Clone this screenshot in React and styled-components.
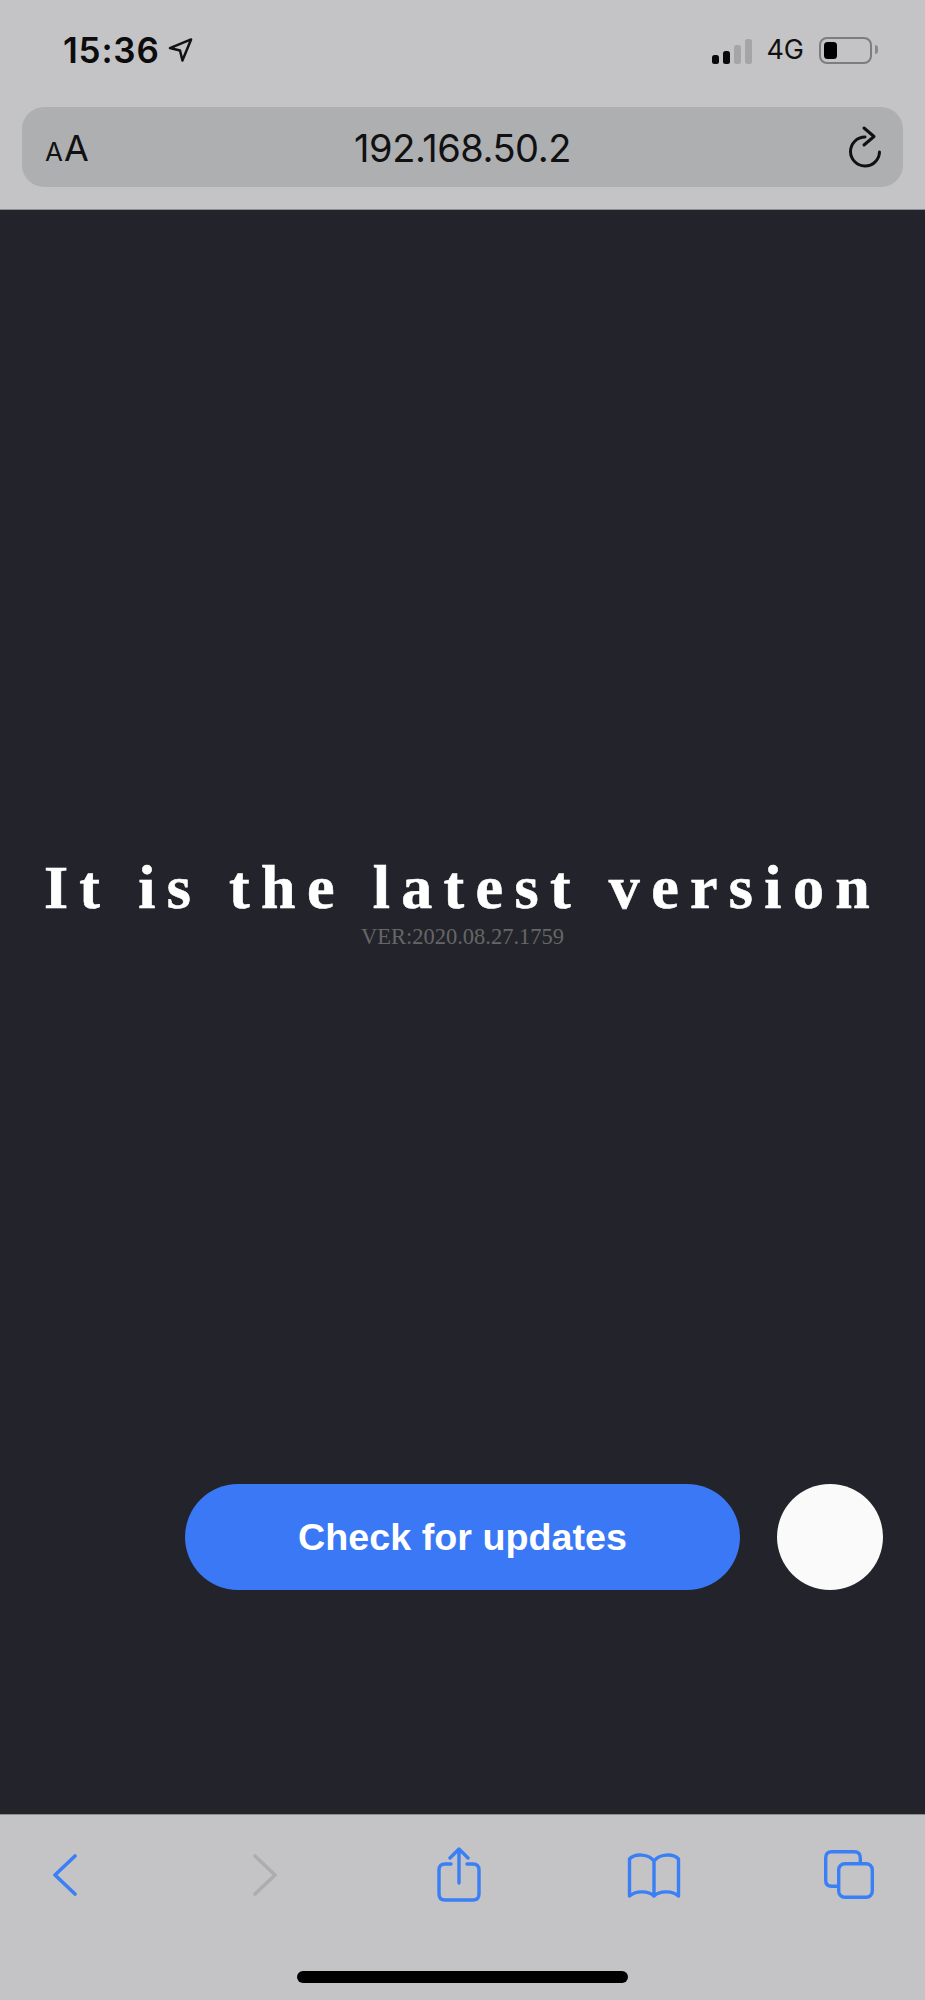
import React from 'react'
import styled, { createGlobalStyle } from 'styled-components'

const BLUE = '#3a7ff6'

const Global = createGlobalStyle`
  html, body { margin: 0; padding: 0; background: #c4c4c6; }
`

const App = () => (
  <>
    <Global />
    <Page>
      <TopBar>
        <StatusRow>
          <TimeGroup>
            <Time>15:36</Time>
            <svg width="25" height="26" viewBox="0 0 26 26">
              <path d="M24 2 L2 11 L12.5 13.5 L15 24 Z" fill="none" stroke="#111" strokeWidth="2.6" strokeLinejoin="round" />
            </svg>
          </TimeGroup>
          <StatusGroup>
            <Signal>
              <Bar $h={9} $on />
              <Bar $h={13} $on />
              <Bar $h={19} />
              <Bar $h={25} />
            </Signal>
            <Network>4G</Network>
            <Battery>
              <BatteryFill />
            </Battery>
          </StatusGroup>
        </StatusRow>
        <UrlBar>
          <FontSize><Small>A</Small>A</FontSize>
          <Url>192.168.50.2</Url>
          <svg width="38" height="44" viewBox="0 0 38 44">
            <path d="M16 12 A14.5 14.5 0 1 0 30.5 27" fill="none" stroke="#111" strokeWidth="3" strokeLinecap="round" />
            <path d="M15 3 L25 11.5 L15 20" fill="none" stroke="#111" strokeWidth="3" strokeLinecap="round" strokeLinejoin="round" />
          </svg>
        </UrlBar>
      </TopBar>

      <Main>
        <Title>It is the latest version</Title>
        <Version>VER:2020.08.27.1759</Version>
        <Actions>
          <CheckButton>Check for updates</CheckButton>
          <RoundButton />
        </Actions>
      </Main>

      <BottomBar>
        <Tools>
          <Tool $left={0}>
            <svg width="24" height="42" viewBox="0 0 24 42">
              <path d="M22 2 L2 21 L22 40" fill="none" stroke={BLUE} strokeWidth="3.6" strokeLinecap="round" strokeLinejoin="round" />
            </svg>
          </Tool>
          <Tool $left={176}>
            <svg width="24" height="42" viewBox="0 0 24 42">
              <path d="M2 2 L22 21 L2 40" fill="none" stroke="#adadaf" strokeWidth="3.6" strokeLinecap="round" strokeLinejoin="round" />
            </svg>
          </Tool>
          <Tool $left={160}>
            <svg width="44" height="56" viewBox="0 0 44 56">
              <path d="M14 17 H8 Q2 17 2 23 V47 Q2 53 8 53 H36 Q42 53 42 47 V23 Q42 17 36 17 H30" fill="none" stroke={BLUE} strokeWidth="3.4" strokeLinecap="round" />
              <path d="M22 36 V3 M13 11 L22 2 L31 11" fill="none" stroke={BLUE} strokeWidth="3.4" strokeLinecap="round" strokeLinejoin="round" />
            </svg>
          </Tool>
          <Tool $left={146}>
            <svg width="54" height="46" viewBox="0 0 54 46">
              <path d="M27 9 C22 2 8 1 2.5 7 V44 C8 39 21 38 27 44 C33 38 46 39 51.5 44 V7 C46 1 32 2 27 9 Z M27 9 V44" fill="none" stroke={BLUE} strokeWidth="3.4" strokeLinejoin="round" />
            </svg>
          </Tool>
          <Tool $left={143}>
            <svg width="52" height="52" viewBox="0 0 52 52">
              <path d="M36.3 13 V8.7 Q36.3 2.7 30.3 2.7 H7.7 Q1.7 2.7 1.7 8.7 V31.3 Q1.7 37.3 7.7 37.3 H13" fill="none" stroke={BLUE} strokeWidth="3.4" />
              <rect x="14.7" y="14.7" width="33.6" height="33.6" rx="6" fill="none" stroke={BLUE} strokeWidth="3.4" />
            </svg>
          </Tool>
        </Tools>
        <HomeIndicator />
      </BottomBar>
    </Page>
  </>
)

export default App

const Page = styled.div`
  width: 925px;
  height: 2000px;
  display: flex;
  flex-direction: column;
  overflow: hidden;
`

const TopBar = styled.header`
  height: 209px;
  flex: none;
  background: #c4c4c6;
  border-bottom: 1px solid #8e8e92;
  padding: 0 22px;
`

const StatusRow = styled.div`
  height: 107px;
  display: flex;
  align-items: flex-start;
  justify-content: space-between;
  padding: 0 31px 0 41px;
`

const TimeGroup = styled.div`
  display: flex;
  align-items: center;
  gap: 8px;
  margin-top: 29px;
`

const Time = styled.span`
  font: 600 35px/42px Inter, "Liberation Sans", sans-serif;
  letter-spacing: 0.8px;
  color: #0c0c0c;
`

const StatusGroup = styled.div`
  display: flex;
  align-items: center;
  margin-top: 36px;
`

const Signal = styled.div`
  display: flex;
  align-items: flex-end;
  gap: 3.5px;
  height: 27px;
`

const Bar = styled.i`
  display: block;
  width: 7.5px;
  height: ${p => p.$h}px;
  border-radius: 2.5px;
  background: ${p => (p.$on ? '#0a0a0a' : '#a5a5a8')};
`

const Network = styled.span`
  font: 400 27px/28px Inter, "Liberation Sans", sans-serif;
  color: #111;
  margin: 0 15px 0 14px;
`

const Battery = styled.div`
  position: relative;
  box-sizing: border-box;
  width: 53px;
  height: 27px;
  padding: 3px;
  border: 2.5px solid #7d7d80;
  border-radius: 8px;
  &::after {
    content: '';
    position: absolute;
    right: -8px;
    top: 6px;
    width: 3.5px;
    height: 9px;
    background: #8a8a8d;
    border-radius: 0 4px 4px 0;
  }
`

const BatteryFill = styled.div`
  width: 13px;
  height: 100%;
  background: #000;
  border-radius: 3.5px;
`

const UrlBar = styled.div`
  position: relative;
  height: 80px;
  display: flex;
  align-items: center;
  justify-content: space-between;
  background: #aeafb1;
  border-radius: 22px;
  padding: 0 16px 0 23px;
`

const FontSize = styled.span`
  font: 400 36px/44px Inter, "Liberation Sans", sans-serif;
  color: #111;
  padding-top: 6px;
`

const Small = styled.span`
  font-size: 26px;
  margin-right: 1px;
`

const Url = styled.span`
  position: absolute;
  left: 0;
  right: 0;
  padding-top: 2px;
  text-align: center;
  font: 400 38px/44px Inter, "Liberation Sans", sans-serif;
  letter-spacing: -0.45px;
  color: #111;
`

const Main = styled.main`
  flex: 1;
  display: flex;
  flex-direction: column;
  align-items: center;
  background: #23242b;
  padding: 642px 42px 224px;
`

const Title = styled.h1`
  margin: 0;
  white-space: nowrap;
  font: 700 62px/70px "Liberation Serif", serif;
  letter-spacing: 11.35px;
  -webkit-text-stroke: 0.6px #fff;
  color: #fff;
`

const Version = styled.div`
  font: 400 22.5px/30px "Liberation Serif", serif;
  color: #666;
`

const Actions = styled.div`
  margin-top: auto;
  align-self: flex-end;
  display: flex;
  gap: 37px;
`

const CheckButton = styled.button`
  width: 555px;
  height: 106px;
  border: none;
  border-radius: 53px;
  background: #3a78f5;
  color: #fff;
  font: 700 37.7px "Liberation Sans", sans-serif;
`

const RoundButton = styled.button`
  width: 106px;
  height: 106px;
  border: none;
  border-radius: 50%;
  background: #fafafa;
`

const BottomBar = styled.footer`
  height: 186px;
  flex: none;
  display: flex;
  flex-direction: column;
  background: #c4c4c6;
  border-top: 1px solid #8e8e92;
  box-sizing: border-box;
`

const Tools = styled.div`
  height: 119px;
  display: flex;
  align-items: center;
  padding: 0 0 0 53px;
`

const Tool = styled.div`
  display: flex;
  margin-left: ${p => p.$left}px;
`

const HomeIndicator = styled.div`
  width: 331px;
  height: 12px;
  margin: 37px auto 0;
  background: #000;
  border-radius: 6px;
`
